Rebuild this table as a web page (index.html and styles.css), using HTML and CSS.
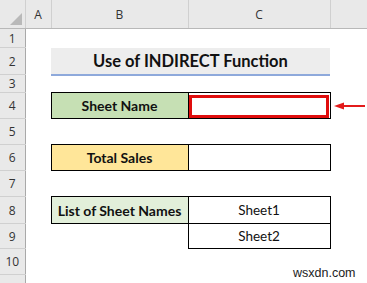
FILE: index.html
```html
<!DOCTYPE html>
<html lang="en">
<head>
    <meta charset="UTF-8">
    <title>Use of INDIRECT Function</title>
    <link rel="stylesheet" href="styles.css">
</head>
<body>
    <div class="sheet">
        <table class="grid">
            <colgroup>
                <col class="col-rh">
                <col class="col-a">
                <col class="col-b">
                <col class="col-c">
                <col class="col-d">
            </colgroup>
            <tr class="row-head">
                <th class="corner">
                    <svg width="14" height="14" viewBox="0 0 14 14"><polygon points="13,1 13,13 1,13" fill="#b9b9b9"/></svg>
                </th>
                <th class="col-head">A</th>
                <th class="col-head">B</th>
                <th class="col-head">C</th>
                <th class="col-head last"></th>
            </tr>
            <tr class="r1">
                <th class="row-num">1</th><td></td><td></td><td></td><td></td>
            </tr>
            <tr class="r2">
                <th class="row-num">2</th><td></td>
                <td colspan="2" class="title">Use of INDIRECT Function</td>
                <td></td>
            </tr>
            <tr class="r3">
                <th class="row-num">3</th><td></td><td></td><td></td><td></td>
            </tr>
            <tr class="r4">
                <th class="row-num">4</th><td></td>
                <td class="box label green">Sheet Name</td>
                <td class="box input"><div class="highlight"></div></td>
                <td class="arrow-cell">
                    <svg class="arrow" width="32" height="8" viewBox="0 0 32 8">
                        <polygon points="0,4 10,0.5 10,7.5" fill="#e31b1b"/>
                        <rect x="9" y="3" width="22" height="2" fill="#e31b1b"/>
                    </svg>
                </td>
            </tr>
            <tr class="r5">
                <th class="row-num">5</th><td></td><td></td><td></td><td></td>
            </tr>
            <tr class="r6">
                <th class="row-num">6</th><td></td>
                <td class="box label gold">Total Sales</td>
                <td class="box"></td>
                <td></td>
            </tr>
            <tr class="r7">
                <th class="row-num">7</th><td></td><td></td><td></td><td></td>
            </tr>
            <tr class="r8">
                <th class="row-num">8</th><td></td>
                <td class="box label pale">List of Sheet Names</td>
                <td class="box value">Sheet1</td>
                <td></td>
            </tr>
            <tr class="r9">
                <th class="row-num">9</th><td></td><td></td>
                <td class="box value">Sheet2</td>
                <td></td>
            </tr>
            <tr class="r10">
                <th class="row-num">10</th><td></td><td></td><td></td><td></td>
            </tr>
            <tr class="r11">
                <th class="row-num"></th><td></td><td></td><td></td><td></td>
            </tr>
        </table>
        <div class="watermark">wsxdn.com</div>
    </div>
</body>
</html>
```

FILE: styles.css
```css
body {
    margin: 0;
    background: #fff;
    font-family: Lato, "Open Sans", sans-serif;
    overflow: hidden;
}
.sheet {
    position: relative;
    width: 367px;
    height: 283px;
    overflow: hidden;
}
.grid {
    border-collapse: collapse;
    table-layout: fixed;
    width: 367px;
}
.grid td,
.grid th {
    padding: 0;
}
.col-rh { width: 25px; }
.col-a { width: 26px; }
.col-b { width: 137px; }
.col-c { width: 142px; }
.col-d { width: 37px; }

.row-head th {
    height: 28px;
    background: #e9e9e9;
    border-bottom: 1px solid #b8b8b8;
    border-right: 1px solid #d0d0d0;
    font-weight: normal;
    font-family: "Open Sans", sans-serif;
    font-size: 12px;
    color: #333;
    vertical-align: middle;
}
.row-head .last {
    border-right: none;
}
.corner {
    text-align: right;
    vertical-align: bottom !important;
    line-height: 0;
}
.corner svg {
    margin: 0 2px 2px 0;
}
.row-num {
    background: #e9e9e9;
    border-right: 1px solid #a9a9a9;
    border-bottom: 1px solid #d0d0d0;
    font-weight: normal;
    font-family: "Open Sans", sans-serif;
    font-size: 12px;
    color: #333;
    text-align: center;
}
.r1 th { height: 18px; }
.r2 th { height: 26px; }
.r3 th { height: 15px; }
.r4 th { height: 25px; }
.r5 th { height: 25px; }
.r6 th { height: 25px; }
.r7 th { height: 25px; }
.r8 th { height: 26px; }
.r9 th { height: 24px; }
.r10 th { height: 25px; }
.r11 th { height: 25px; border-bottom: none; }

.title {
    background: #ededed;
    border-bottom: 2px solid #8ea9db;
    text-align: center;
    font-weight: bold;
    font-size: 16.5px;
    color: #111;
}
.box {
    border: 1px solid #000;
    text-align: center;
    font-size: 14px;
    color: #111;
}
.label {
    font-weight: bold;
}
.green { background: #c6e0b4; }
.gold { background: #ffe699; }
.pale { background: #e2efda; }
.value {
    font-size: 13.5px;
}
.input {
    padding: 2px 1px 0 0 !important;
}
.highlight {
    height: 17px;
    border: 3px solid #e00d0d;
}
.arrow-cell {
    padding-left: 3px !important;
    line-height: 0;
}
.watermark {
    position: absolute;
    left: 293px;
    top: 266px;
    font-family: "Liberation Sans", Arial, sans-serif;
    font-size: 12.5px;
    color: #222;
    background: #fff;
}
```
